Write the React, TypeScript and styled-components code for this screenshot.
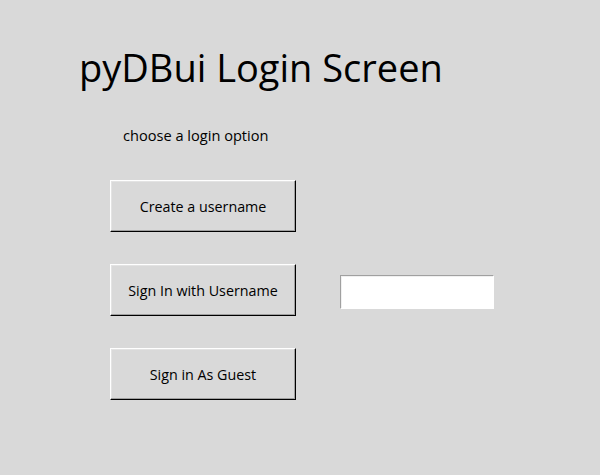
import styled, { createGlobalStyle } from "styled-components";

const GlobalStyle = createGlobalStyle`
  html, body {
    margin: 0;
    padding: 0;
    background: #d9d9d9;
  }
  body {
    font-family: "Open Sans", "Noto Sans", "Liberation Sans", sans-serif;
    color: #000;
  }
`;

const Screen = styled.main`
  width: 600px;
  height: 475px;
  box-sizing: border-box;
  padding: 44px 0 0 79px;
  background: #d9d9d9;
  display: flex;
  flex-direction: column;
`;

const Title = styled.h1`
  margin: 0;
  height: 46px;
  font-size: 38px;
  font-weight: 400;
  line-height: 46px;
  white-space: nowrap;
`;

const Subtitle = styled.p`
  margin: 35px 0 0 44px;
  height: 20px;
  font-size: 14.6px;
  line-height: 20px;
`;

const Options = styled.div`
  margin: 35px 0 0 31px;
  display: grid;
  grid-template-columns: 186px 154px;
  column-gap: 44px;
  row-gap: 32px;
  align-items: center;
`;

const RaisedButton = styled.button`
  grid-column: 1;
  width: 186px;
  height: 52px;
  box-sizing: border-box;
  padding: 0;
  background: #d9d9d9;
  border: 1px solid;
  border-color: #ffffff #000000 #000000 #ffffff;
  box-shadow: inset -1px -1px 0 #a0a0a0, inset 1px 1px 0 #e3e3e3;
  font-family: inherit;
  font-size: 14.3px;
  color: #000;
  cursor: pointer;
`;

const Entry = styled.input`
  grid-column: 2;
  width: 154px;
  height: 34px;
  margin-top: 3px;
  box-sizing: border-box;
  padding: 0 4px;
  background: #ffffff;
  border: 1px solid;
  border-color: #a0a0a0 #ffffff #ffffff #a0a0a0;
  box-shadow: inset 1px 1px 0 #f0f0f0;
  font-family: inherit;
  font-size: 14px;
  outline: none;
`;

const App = () => {
  return (
    <>
      <GlobalStyle />
      <Screen>
        <Title>pyDBui Login Screen</Title>
        <Subtitle>choose a login option</Subtitle>
        <Options>
          <RaisedButton>Create a username</RaisedButton>
          <RaisedButton>Sign In with Username</RaisedButton>
          <Entry type="text" aria-label="username" />
          <RaisedButton>Sign in As Guest</RaisedButton>
        </Options>
      </Screen>
    </>
  );
};

export default App;
